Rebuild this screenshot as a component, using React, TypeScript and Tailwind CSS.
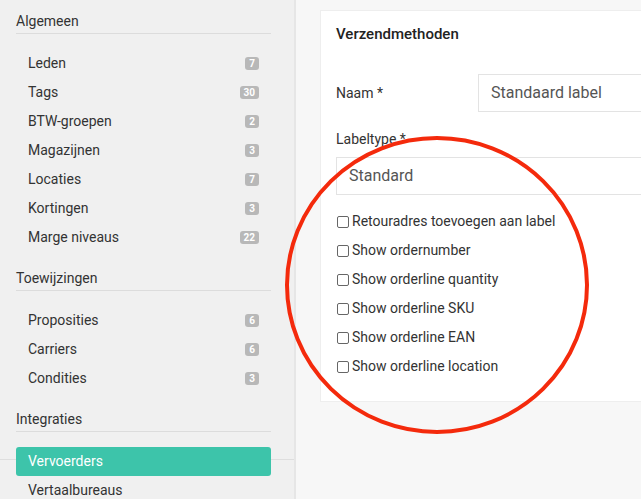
import React from "react";

type Item = { label: string; count?: number; active?: boolean };

const groups: { title: string; items: Item[] }[] = [
  {
    title: "Algemeen",
    items: [
      { label: "Leden", count: 7 },
      { label: "Tags", count: 30 },
      { label: "BTW-groepen", count: 2 },
      { label: "Magazijnen", count: 3 },
      { label: "Locaties", count: 7 },
      { label: "Kortingen", count: 3 },
      { label: "Marge niveaus", count: 22 },
    ],
  },
  {
    title: "Toewijzingen",
    items: [
      { label: "Proposities", count: 6 },
      { label: "Carriers", count: 6 },
      { label: "Condities", count: 3 },
    ],
  },
  {
    title: "Integraties",
    items: [{ label: "Vervoerders", active: true }, { label: "Vertaalbureaus" }],
  },
];

const options = [
  "Retouradres toevoegen aan label",
  "Show ordernumber",
  "Show orderline quantity",
  "Show orderline SKU",
  "Show orderline EAN",
  "Show orderline location",
];

export default function App() {
  return (
    <div
      className="relative flex h-[499px] w-[641px] overflow-hidden bg-[#f7f7f7] text-[#333]"
      style={{ fontFamily: "Roboto, 'Liberation Sans', sans-serif" }}
    >
      <aside className="relative w-[296px] shrink-0 border-r-2 border-[#e6e6e6] bg-[#f0f0f0] pl-4 pr-[23px] pt-[13px]">
        <div className="absolute left-0 right-0 top-[459px] h-px bg-[#dedede]" />
        {groups.map((g) => (
          <div key={g.title} className="relative mb-[18px] first:mb-[17px]">
            <div className="border-b border-[#dcdcdc] pb-[3px] text-[14px] leading-[17px]">{g.title}</div>
            <ul className="mt-[15px]">
              {g.items.map((it) =>
                it.active ? (
                  <li
                    key={it.label}
                    className="flex h-[29px] items-center rounded-[3px] bg-[#3dc4aa] px-3 text-[14px] text-white"
                  >
                    {it.label}
                  </li>
                ) : (
                  <li key={it.label} className="flex h-[29px] items-center justify-between pl-3 pr-3 text-[14px]">
                    <span>{it.label}</span>
                    {it.count !== undefined && (
                      <span className="rounded-[3px] bg-[#b8b8b8] px-[4px] text-[10px] font-bold leading-[13px] text-white">
                        {it.count}
                      </span>
                    )}
                  </li>
                )
              )}
            </ul>
          </div>
        ))}
      </aside>

      <main className="flex-1 pl-[24px] pt-[10px]">
        <div className="w-[400px] border border-[#eeeeee] bg-white pb-[20px] pl-[15px]">
          <h2 className="pt-[14px] text-[15px] font-medium leading-[18px] text-[#222]">Verzendmethoden</h2>

          <div className="mt-[31px] flex items-center">
            <label className="w-[142px] text-[14px]">Naam *</label>
            <div className="flex h-[38px] flex-1 items-center border border-[#e3e3e3] px-3 text-[16px] text-[#555]">
              Standaard label
            </div>
          </div>

          <label className="mt-[18px] block text-[14px] leading-[18px]">Labeltype *</label>
          <div className="mt-[9px] flex h-[38px] items-center border border-[#e3e3e3] px-3 text-[16px] text-[#555]">
            Standard
          </div>

          <div className="mt-[12px] flex flex-col">
            {options.map((o) => (
              <label key={o} className="flex h-[29px] items-center text-[14px]">
                <span className="ml-px mr-[3px] h-[12px] w-[12px] rounded-[2px] border border-[#666] bg-white" />
                {o}
              </label>
            ))}
          </div>
        </div>
      </main>

      <svg className="pointer-events-none absolute left-0 top-0" width="641" height="499">
        <ellipse cx="437" cy="285" rx="150" ry="147" fill="none" stroke="#f42a0c" strokeWidth="4" />
      </svg>
    </div>
  );
}
